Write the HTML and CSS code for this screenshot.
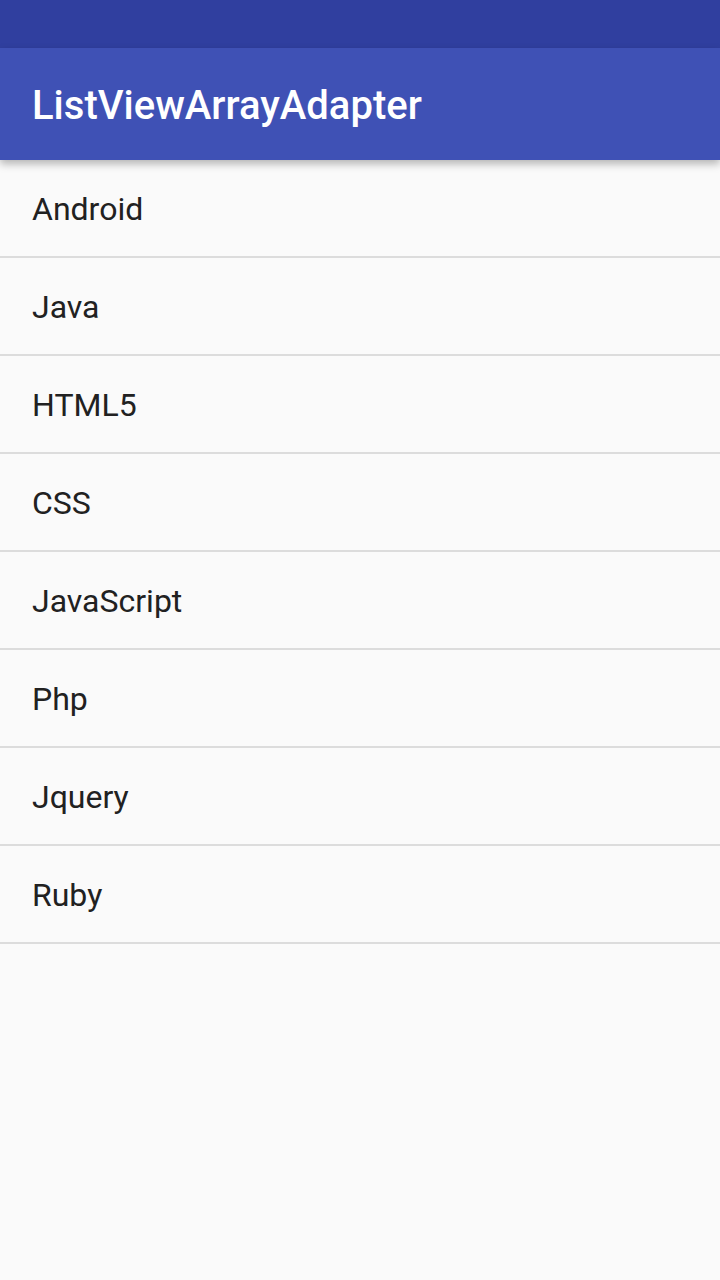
FILE: index.html
```html
<!DOCTYPE html>
<html>
<head>
<meta charset="utf-8">
<link rel="stylesheet" href="styles.css">
</head>
<body>
<div class="status"></div>
<header class="toolbar"><span class="title">ListViewArrayAdapter</span></header>
<ul class="list">
  <li class="item">Android</li>
  <li class="item">Java</li>
  <li class="item">HTML5</li>
  <li class="item">CSS</li>
  <li class="item">JavaScript</li>
  <li class="item">Php</li>
  <li class="item">Jquery</li>
  <li class="item">Ruby</li>
</ul>
</body>
</html>
```
FILE: styles.css
```css
html, body {
  margin: 0;
  padding: 0;
  height: 100%;
}
body {
  background: #fafafa;
  font-family: Roboto, "Noto Sans", sans-serif;
  overflow: hidden;
}
.status {
  height: 48px;
  background: #303f9f;
}
.toolbar {
  height: 112px;
  box-sizing: border-box;
  padding-top: 3px;
  background: #3f51b5;
  display: flex;
  align-items: center;
  padding-left: 32px;
  box-shadow: 0 4px 8px rgba(0,0,0,0.28);
  position: relative;
  z-index: 1;
}
.title {
  color: #ffffff;
  font-size: 40px;
  font-weight: 500;
}
.list {
  list-style: none;
  margin: 0;
  padding: 0;
}
.item {
  height: 96px;
  box-sizing: border-box;
  padding-top: 2px;
  display: flex;
  align-items: center;
  padding-left: 32px;
  font-size: 32px;
  color: #212121;
  border-bottom: 2px solid #dcdcdc;
  height: 98px;
}
```
